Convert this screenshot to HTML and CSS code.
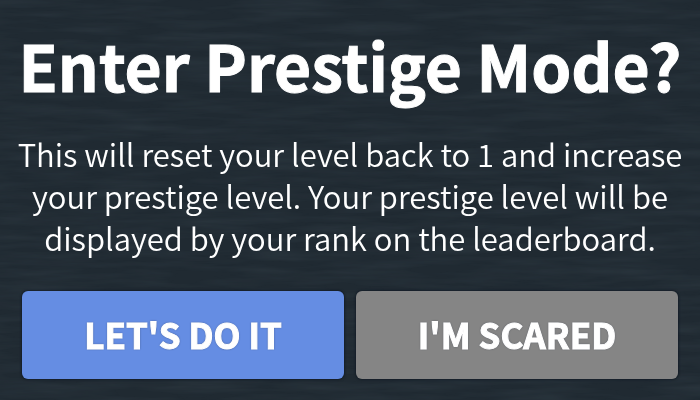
FILE: index.html
```html
<!DOCTYPE html>
<html lang="en">
<head>
    <meta charset="UTF-8">
    <meta name="viewport" content="width=device-width, initial-scale=1.0">
    <title>Enter Prestige Mode?</title>
    <link rel="stylesheet" href="styles.css">
</head>
<body>
    <svg class="grain" aria-hidden="true">
        <filter id="woodGrain" x="0" y="0" width="100%" height="100%">
            <feTurbulence type="fractalNoise" baseFrequency="0.012 0.12" numOctaves="4" seed="4"/>
            <feColorMatrix values="0 0 0 0 0.25  0 0 0 0 0.34  0 0 0 0 0.4  1.2 0 0 0 -0.4"/>
        </filter>
        <rect width="100%" height="100%" filter="url(#woodGrain)"/>
    </svg>
    <main class="prompt">
        <h1>Enter Prestige Mode?</h1>
        <p>This will reset your level back to 1 and increase your prestige level. Your prestige level will be displayed by your rank on the leaderboard.</p>
        <div class="actions">
            <button type="button" class="confirm">LET'S DO IT</button>
            <button type="button" class="cancel">I'M SCARED</button>
        </div>
    </main>
</body>
</html>
```

FILE: styles.css
```css
* {
    box-sizing: border-box;
}
body {
    margin: 0;
    min-height: 100vh;
    font-family: "Noto Sans CJK SC", "Noto Sans", sans-serif;
    color: #fff;
    background-color: #202a32;
}
.grain {
    position: fixed;
    inset: 0;
    z-index: -1;
    width: 100%;
    height: 100%;
    opacity: 0.12;
}
.prompt {
    padding: 20px 16px;
    text-align: center;
}
h1 {
    margin: 0 0 25px;
    font-size: 64px;
    line-height: 88px;
    font-weight: bold;
    white-space: nowrap;
    -webkit-text-stroke: 1px #fff;
}
p {
    margin: 0 0 32px;
    font-size: 31px;
    line-height: 42px;
    font-weight: 350;
}
.actions {
    display: grid;
    grid-template-columns: 1fr 1fr;
    gap: 12px;
    padding: 0 6px;
}
button {
    height: 88px;
    padding: 0 0 4px;
    border: none;
    border-radius: 6px;
    box-shadow: 0 0 2px 1px rgba(12, 20, 32, 0.6);
    font-family: inherit;
    font-size: 35px;
    font-weight: bold;
    color: #fff;
    text-shadow: 0 0 2px rgba(40, 50, 70, 0.8);
    -webkit-text-stroke: 1px #fff;
    cursor: pointer;
}
.confirm {
    background-color: #658de3;
}
.cancel {
    background-color: #858585;
}
```
